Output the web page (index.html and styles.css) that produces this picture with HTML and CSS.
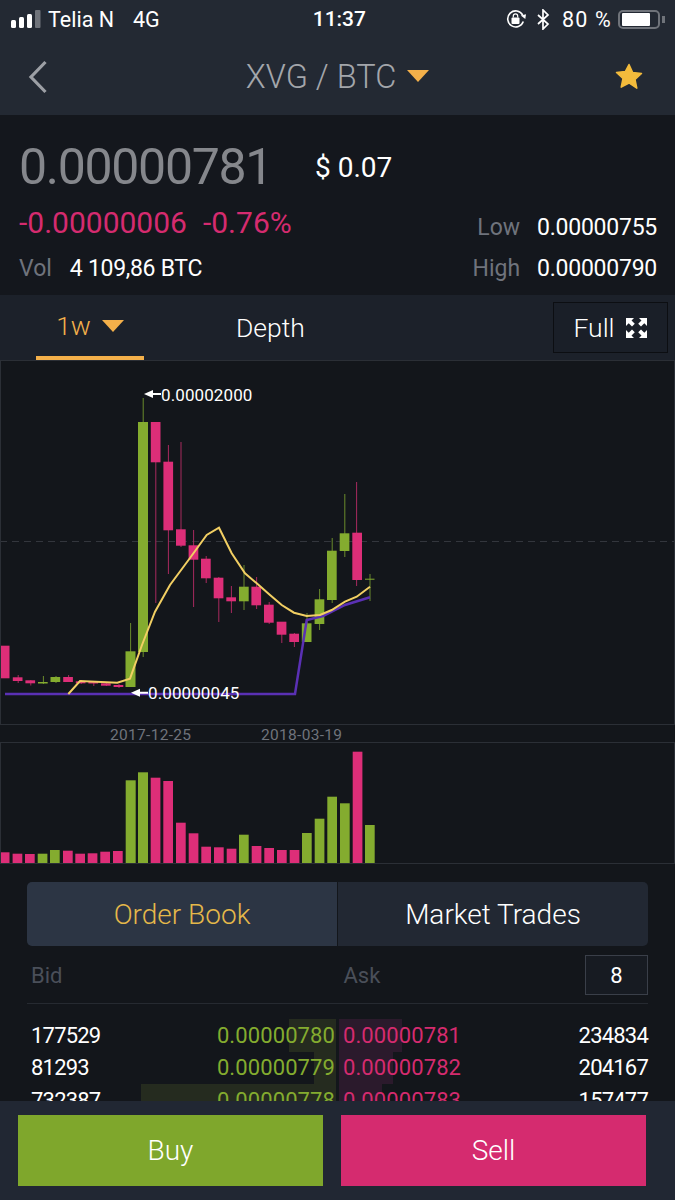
FILE: index.html
```html
<!DOCTYPE html>
<html>
  <head>
    <meta charset="utf-8">
    <title>XVG / BTC</title>
    <meta name="viewport" content="width=device-width, initial-scale=1">
    <link rel="stylesheet" href="styles.css">
  </head>
  <body>
    <div class="page">
      <header class="top">
        <div class="status">
          <div class="status-left">
            <svg class="signal" width="30" height="18" viewBox="0 0 30 18">
              <rect x="0" y="10" width="5" height="8" rx="1.500" fill="#fff"/>
              <rect x="8" y="7" width="5" height="11" rx="1.500" fill="#fff"/>
              <rect x="16" y="4" width="5" height="14" rx="1.500" fill="#fff"/>
              <rect x="24" y="0" width="5.500" height="18" rx="1" fill="#6f737a"/>
            </svg>
            <span>Telia N</span>
            <span class="net">4G</span>
          </div>
          <div class="clock">11:37</div>
          <div class="status-right">
            <svg width="20" height="20" viewBox="0 0 20 20">
              <path d="M17.300 12.500a8 8 0 1 1-.6-6.500" fill="none" stroke="#fff" stroke-width="1.600"/>
              <path d="M14.800 6.500l4.500 3.500 .7-4.800z" fill="#fff"/>
              <rect x="5.500" y="8.500" width="8" height="6.500" rx="1" fill="#fff"/>
              <path d="M7.300 8.500V7a2.200 2.200 0 0 1 4.400 0v1.500" fill="none" stroke="#fff" stroke-width="1.200"/>
            </svg>
            <svg class="bt" width="13" height="21" viewBox="0 0 13 21">
              <path d="M1 6l10 9-5 5V1l5 5-10 9" fill="none" stroke="#fff" stroke-width="1.700"/>
            </svg>
            <span>80 %</span>
            <div class="battery"><div class="battery-fill"></div></div>
            <div class="battery-nub"></div>
          </div>
        </div>
        <nav class="bar">
          <svg class="back" width="20" height="34" viewBox="0 0 20 34">
            <path d="M17.500 2L3 17l14.500 15" fill="none" stroke="#9c9fa5" stroke-width="3.200"/>
          </svg>
          <div class="pair">XVG / BTC<span class="tri"></span></div>
          <svg class="star" width="28" height="27" viewBox="0 0 28 27">
            <path d="M14 1.500l3.700 8 8.800 1-6.500 6 1.800 8.700L14 20l-7.800 4.200L8 15.500l-6.500-6 8.800-1z" fill="#f3bb3c" stroke="#f3bb3c" stroke-width="1.500" stroke-linejoin="round"/>
          </svg>
        </nav>
      </header>

      <section class="stats">
        <div class="price-row">
          <span class="price">0.00000781</span>
          <span class="usd">$ 0.07</span>
        </div>
        <div class="stat-row change-row">
          <div class="change"><span>-0.00000006</span><span>-0.76%</span></div>
          <div class="pairing"><span class="label">Low</span><span class="value">0.00000755</span></div>
        </div>
        <div class="stat-row">
          <div class="vol"><span class="label">Vol</span><span class="value">4 109,86 BTC</span></div>
          <div class="pairing"><span class="label">High</span><span class="value">0.00000790</span></div>
        </div>
      </section>

      <section class="tabs">
        <div class="tab tab-on">1w<span class="tri tri-small"></span></div>
        <div class="tab tab-depth">Depth</div>
        <div class="full">Full
          <svg width="23" height="22" viewBox="0 0 23 22">
            <g fill="#fff">
              <path d="M1 1h8l-2.500 2.500L9.800 6.800 7 9.600 3.700 6.300 1 9z"/>
              <path d="M22 1h-8l2.500 2.500-3.300 3.300 2.800 2.800 3.300-3.300L22 9z"/>
              <path d="M1 21h8l-2.500-2.500 3.300-3.300L7 12.400l-3.300 3.300L1 13z"/>
              <path d="M22 21h-8l2.500-2.500-3.300-3.300 2.800-2.800 3.300 3.300L22 13z"/>
            </g>
          </svg>
        </div>
      </section>

      <section class="chart">
        <svg class="plot" width="675" height="365" viewBox="0 360 675 365">
          <line x1="0" y1="541.500" x2="675" y2="541.500" stroke="#33363d" stroke-dasharray="7 5"/>
          <!-- wicks -->
          <g class="wick-pink">
            <rect x="17.700" y="675" width="1" height="8"/>
            <rect x="30.300" y="680" width="1" height="5.500"/>
            <rect x="68.100" y="675" width="1" height="7"/>
            <rect x="80.700" y="680" width="1" height="4"/>
            <rect x="93.300" y="681" width="1" height="5"/>
            <rect x="105.900" y="682" width="1" height="4"/>
            <rect x="118.500" y="684" width="1" height="4"/>
            <rect x="155.300" y="422" width="1" height="181"/>
            <rect x="167.900" y="445" width="1" height="129"/>
            <rect x="180.500" y="442" width="1" height="105"/>
            <rect x="193.100" y="530" width="1" height="77"/>
            <rect x="205.700" y="556" width="1" height="27"/>
            <rect x="218.300" y="577" width="1" height="45"/>
            <rect x="230.900" y="586" width="1" height="27"/>
            <rect x="256.100" y="577" width="1" height="32"/>
            <rect x="268.700" y="602" width="1" height="22"/>
            <rect x="281.300" y="622" width="1" height="21"/>
            <rect x="293.900" y="633" width="1" height="14"/>
            <rect x="356.100" y="482" width="1" height="104"/>
          </g>
          <g class="wick-green">
            <rect x="42.900" y="676" width="1" height="8"/>
            <rect x="55.500" y="676" width="1" height="7"/>
            <rect x="130.100" y="623" width="1" height="64"/>
            <rect x="142.700" y="398" width="1" height="259"/>
            <rect x="243.500" y="565" width="1" height="45"/>
            <rect x="306.500" y="613" width="1" height="29"/>
            <rect x="319.100" y="589" width="1" height="41"/>
            <rect x="331.700" y="538" width="1" height="65"/>
            <rect x="344.300" y="494" width="1" height="63"/>
            <rect x="369.500" y="574" width="1" height="27"/>
          </g>
          <!-- bodies -->
          <g class="body-pink">
            <rect x="1" y="645.700" width="8.500" height="32.600"/>
            <rect x="12.800" y="677.300" width="9.700" height="3.700"/>
            <rect x="25.400" y="680.300" width="9.700" height="3"/>
            <rect x="63.200" y="677" width="9.700" height="5"/>
            <rect x="75.800" y="681.300" width="9.700" height="2"/>
            <rect x="88.400" y="682" width="9.700" height="1.500"/>
            <rect x="101" y="683.300" width="9.700" height="2.400"/>
            <rect x="113.600" y="685" width="9.700" height="2"/>
            <rect x="150.800" y="422" width="9.700" height="40.300"/>
            <rect x="163.400" y="461.700" width="9.700" height="68.600"/>
            <rect x="176" y="529.300" width="9.700" height="16.400"/>
            <rect x="188.600" y="545.300" width="9.700" height="14.400"/>
            <rect x="201" y="558.700" width="9.700" height="19.600"/>
            <rect x="213.700" y="577.700" width="9.700" height="20.600"/>
            <rect x="226.300" y="597.300" width="9.700" height="4"/>
            <rect x="251.400" y="586.700" width="9.700" height="18.600"/>
            <rect x="264" y="604.700" width="9.700" height="18"/>
            <rect x="276.700" y="621.700" width="9.700" height="13"/>
            <rect x="289.300" y="633.700" width="9.700" height="8.300"/>
            <rect x="352.300" y="532.700" width="9.700" height="47.300"/>
          </g>
          <g class="body-green">
            <rect x="38" y="682" width="9.700" height="1.500"/>
            <rect x="50.500" y="677" width="9.700" height="5"/>
            <rect x="125.500" y="651.300" width="10" height="35.700"/>
            <rect x="138" y="422" width="10" height="230"/>
            <rect x="239" y="586.700" width="9.700" height="14.600"/>
            <rect x="301.800" y="623.300" width="9.700" height="18.700"/>
            <rect x="314.600" y="599.300" width="9.700" height="24.700"/>
            <rect x="327" y="550.700" width="9.700" height="49.300"/>
            <rect x="339.700" y="533.300" width="9.700" height="17.700"/>
            <rect x="365" y="578.700" width="9.500" height="1"/>
          </g>
          <polyline class="purple" points="5,694 295,694 306.700,620 323,616 345,605 370,597.300"/>
          <polyline class="yellow" points="68.300,694 80,681 117.300,682.700 130,678.700 142,645 155,611.700 170,585 190,558 206.700,535 219,527.700 231.700,553.300 245,573.300 256.700,583.300 270,595 281.700,605 294,612.700 306.700,616 320,615 331.700,610 345,601.700 356.700,596.700 370,586.700"/>
          <path class="arrow" d="M144 394l9-4v3h8v2h-8v3z"/>
          <text class="mark" x="161" y="401">0.00002000</text>
          <path class="arrow" d="M131 692.700l9-4v3h8v2h-8v3z"/>
          <text class="mark" x="148" y="699">0.00000045</text>
        </svg>
        <div class="dates">
          <span class="date-one">2017-12-25</span>
          <span class="date-two">2018-03-19</span>
        </div>
        <svg class="plot" width="675" height="122" viewBox="0 742 675 122">
          <g class="body-pink">
            <rect x="1" y="852.300" width="8.500" height="10.700"/>
            <rect x="12.600" y="853.700" width="9.700" height="9.300"/>
            <rect x="25" y="854" width="9.700" height="9"/>
            <rect x="63" y="850.700" width="9.700" height="12.300"/>
            <rect x="75.300" y="853.700" width="9.700" height="9.300"/>
            <rect x="87.700" y="853.300" width="9.700" height="9.700"/>
            <rect x="100.300" y="851.700" width="9.700" height="11.300"/>
            <rect x="113" y="851" width="9.700" height="12"/>
            <rect x="150.700" y="777.700" width="9.700" height="85.300"/>
            <rect x="163.300" y="781" width="9.700" height="82"/>
            <rect x="176" y="822.700" width="9.700" height="40.300"/>
            <rect x="188.700" y="833.300" width="9.700" height="29.700"/>
            <rect x="201.300" y="846.700" width="9.700" height="16.300"/>
            <rect x="214" y="847.300" width="9.700" height="15.700"/>
            <rect x="226.700" y="848.700" width="9.700" height="14.300"/>
            <rect x="251.700" y="846" width="9.700" height="17"/>
            <rect x="264.300" y="848" width="9.700" height="15"/>
            <rect x="277" y="850" width="9.700" height="13"/>
            <rect x="289.700" y="850" width="9.700" height="13"/>
            <rect x="352.700" y="751.700" width="9.700" height="111.300"/>
          </g>
          <g class="body-green">
            <rect x="37.700" y="853.700" width="9.700" height="9.300"/>
            <rect x="50" y="850" width="9.700" height="13"/>
            <rect x="125.700" y="780.300" width="10" height="82.700"/>
            <rect x="138" y="772.300" width="10" height="90.700"/>
            <rect x="239" y="834.700" width="9.700" height="28.300"/>
            <rect x="302" y="833" width="9.700" height="30"/>
            <rect x="314.700" y="818.700" width="9.700" height="44.300"/>
            <rect x="327.300" y="796.700" width="9.700" height="66.300"/>
            <rect x="340" y="803.300" width="9.700" height="59.700"/>
            <rect x="365" y="825" width="9.700" height="38"/>
          </g>
        </svg>
      </section>

      <section class="book">
        <div class="switch">
          <div class="switch-on">Order Book</div>
          <div class="switch-off">Market Trades</div>
        </div>
        <div class="book-head">
          <span class="head-bid">Bid</span>
          <span class="head-ask">Ask</span>
          <span class="decimals">8</span>
        </div>
        <div class="rows">
          <div class="row">
            <div class="bid"><i class="depth" style="width: 47px"></i><span class="qty">177529</span><span class="up">0.00000780</span></div>
            <div class="ask"><i class="depth" style="width: 63px"></i><span class="down">0.00000781</span><span class="qty">234834</span></div>
          </div>
          <div class="row">
            <div class="bid"><i class="depth" style="width: 22px"></i><span class="qty">81293</span><span class="up">0.00000779</span></div>
            <div class="ask"><i class="depth" style="width: 54px"></i><span class="down">0.00000782</span><span class="qty">204167</span></div>
          </div>
          <div class="row">
            <div class="bid"><i class="depth" style="width: 195px"></i><span class="qty">732387</span><span class="up">0.00000778</span></div>
            <div class="ask"><i class="depth" style="width: 43px"></i><span class="down">0.00000783</span><span class="qty">157477</span></div>
          </div>
        </div>
      </section>

      <footer class="actions">
        <div class="btn buy">Buy</div>
        <div class="btn sell">Sell</div>
      </footer>
    </div>
  </body>
</html>
```

FILE: styles.css
```css
body {
  margin: 0;
  background-color: #13161b;
  font-family: "Roboto", "Liberation Sans", sans-serif;
  color: #fff;
}

.page {
  width: 675px;
  height: 1200px;
  display: flex;
  flex-direction: column;
  overflow: hidden;
}

/* status + nav */
.top {
  height: 115px;
  background-color: #232933;
}

.status {
  height: 38px;
  display: flex;
  align-items: center;
  justify-content: space-between;
  padding: 0 10px 0 11px;
  font-size: 21.500px;
}

.status-left {
  display: flex;
  align-items: center;
}

.signal {
  margin-right: 7px;
}

.net {
  margin-left: 19px;
}

.clock {
  font-size: 21px;
  font-weight: 500;
  margin-left: 13px;
}

.status-right {
  display: flex;
  align-items: center;
}

.bt {
  margin-left: 11px;
}

.status-right span {
  margin-left: 12px;
  letter-spacing: 1.200px;
}

.battery {
  width: 42px;
  height: 19px;
  box-sizing: border-box;
  border: 2px solid #6f737a;
  border-radius: 5px;
  padding: 1px 2px;
  margin-left: 6px;
}

.battery-fill {
  width: 28px;
  height: 13px;
  background-color: #fff;
  border-radius: 1px;
}

.battery-nub {
  width: 3px;
  height: 7px;
  background-color: #6f737a;
  margin-left: 2px;
}

.bar {
  height: 77px;
  display: flex;
  align-items: center;
  padding: 0 32px 5px 28px;
  justify-content: space-between;
}

.pair {
  font-size: 32.500px;
  font-weight: 300;
  color: #a3a6ab;
  display: flex;
  align-items: center;
  margin-left: 12px;
}

.tri {
  width: 0;
  height: 0;
  border-left: 11px solid transparent;
  border-right: 11px solid transparent;
  border-top: 12px solid #f4b04a;
  margin-left: 11px;
  margin-bottom: 2px;
}

/* price block */
.stats {
  height: 180px;
  box-sizing: border-box;
  background-color: #14171d;
  padding: 22px 18px 0 19px;
}

.price-row {
  height: 60px;
  display: flex;
  align-items: center;
}

.price {
  font-size: 50px;
  letter-spacing: -1.300px;
  color: #85878c;
  width: 296px;
}

.usd {
  font-size: 28px;
}

.stat-row {
  height: 34px;
  display: flex;
  align-items: center;
  justify-content: space-between;
  font-size: 23px;
}

.change-row {
  height: 48px;
  margin-top: 6px;
}

.change {
  display: flex;
  gap: 16px;
  font-size: 30px;
  color: #d52b6f;
  margin-top: -10px;
}

.label {
  color: #6f737c;
}

.vol .value {
  margin-left: 18px;
  letter-spacing: -0.300px;
}

.pairing {
  display: flex;
  gap: 17px;
}

.pairing .value {
  letter-spacing: -0.250px;
}

/* chart tabs */
.tabs {
  height: 65px;
  box-sizing: border-box;
  background-color: #1c212a;
  display: flex;
  align-items: center;
  font-size: 26.500px;
  font-weight: 300;
  padding: 0 7px 0 36px;
}

.tab {
  height: 65px;
  box-sizing: border-box;
  display: flex;
  align-items: center;
  justify-content: center;
}

.tab-on {
  width: 108px;
  color: #f4b04a;
  border-bottom: 4px solid #f4b04a;
}

.tri-small {
  margin-bottom: 0;
}

.tab-depth {
  margin-left: 92px;
}

.full {
  margin-left: auto;
  width: 115px;
  height: 51px;
  box-sizing: border-box;
  border: 1px solid #0c0e12;
  background-color: #1a1f28;
  display: flex;
  align-items: center;
  justify-content: center;
  gap: 10px;
}

/* chart */
.chart {
  height: 504px;
  flex: none;
  background-color: #13161b;
}

.plot {
  display: block;
  outline: 1px solid #2b2f36;
  outline-offset: -1px;
}

.wick-pink rect {
  fill: #a82a5f;
}

.wick-green rect {
  fill: #6a8a2c;
}

.body-pink rect {
  fill: #dd2e78;
}

.body-green rect {
  fill: #84ac2f;
}

.purple {
  fill: none;
  stroke: #5a30b4;
  stroke-width: 2.500;
}

.yellow {
  fill: none;
  stroke: #f2cf63;
  stroke-width: 2;
}

.arrow {
  fill: #fff;
}

.mark {
  fill: #fff;
  font-size: 17px;
  letter-spacing: 0.100px;
}

.dates {
  height: 17px;
  position: relative;
  font-size: 15.500px;
  letter-spacing: 0.300px;
  color: #6f737c;
}

.date-one,
.date-two {
  position: absolute;
  top: 1px;
}

.date-one {
  left: 110px;
}

.date-two {
  left: 261px;
}

/* order book */
.book {
  flex: 1;
  min-height: 0;
  overflow: hidden;
  padding: 18px 27px 0;
}

.switch {
  height: 64px;
  display: flex;
  border-radius: 5px;
  overflow: hidden;
  font-size: 28px;
  font-weight: 300;
}

.switch-on {
  width: 310px;
  background-color: #2c3544;
  color: #e5b84a;
  border-right: 1px solid #13161b;
  display: flex;
  align-items: center;
  justify-content: center;
}

.switch-off {
  flex: 1;
  background-color: #222833;
  display: flex;
  align-items: center;
  justify-content: center;
}

.book-head {
  height: 40px;
  margin-top: 9px;
  padding: 0 0 8px 4px;
  display: flex;
  align-items: center;
  border-bottom: 1px solid #262a31;
  font-size: 22px;
  color: #4a4f59;
}

.head-ask {
  margin-left: 281px;
}

.decimals {
  margin-left: auto;
  width: 63px;
  height: 40px;
  box-sizing: border-box;
  border: 1px solid #3a3f49;
  background-color: #171b22;
  color: #fff;
  display: flex;
  align-items: center;
  justify-content: center;
}

.rows {
  padding-top: 15px;
}

.row {
  height: 32.500px;
  display: flex;
  gap: 7px;
  font-size: 22px;
}

.bid,
.ask {
  position: relative;
  display: flex;
  align-items: center;
  justify-content: space-between;
}

.bid {
  width: 309px;
  padding: 0 1px 0 4px;
  box-sizing: border-box;
}

.ask {
  flex: 1;
}

.bid span,
.ask span {
  position: relative;
}

.qty {
  letter-spacing: -0.800px;
}

.depth {
  position: absolute;
  top: 0;
  bottom: 0;
}

.bid .depth {
  right: 0;
  background-color: #252b1f;
}

.ask .depth {
  left: -4px;
  background-color: #2b1a2c;
}

.up {
  color: #84ac2f;
  letter-spacing: 0.100px;
}

.down {
  color: #d52b6f;
  letter-spacing: 0.100px;
}

/* buy + sell */
.actions {
  height: 99px;
  flex: none;
  box-sizing: border-box;
  background-color: #212733;
  display: flex;
  gap: 18px;
  padding: 14px 29px 14px 18px;
}

.btn {
  flex: 1;
  display: flex;
  align-items: center;
  justify-content: center;
  font-size: 28px;
  font-weight: 300;
}

.buy {
  background-color: #7fa72c;
}

.sell {
  background-color: #d52b6f;
}
```
